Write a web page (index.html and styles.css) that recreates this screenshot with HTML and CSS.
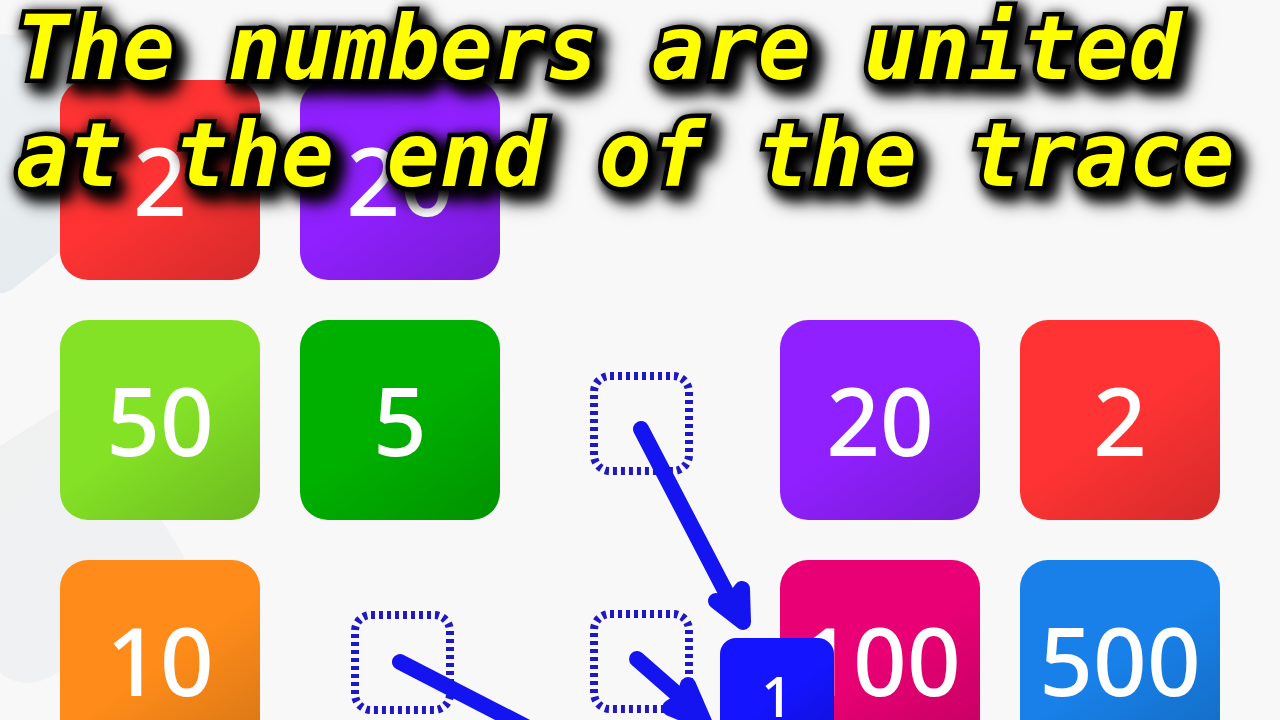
FILE: index.html
```
<!DOCTYPE html>
<html lang="en">
<head>
<meta charset="utf-8">
<meta name="viewport" content="width=device-width, initial-scale=1">
<title>Number tiles</title>
<link rel="stylesheet" href="styles.css">
</head>
<body>
<main class="stage">
  <svg class="layer" viewBox="0 0 1280 720" preserveAspectRatio="xMinYMin meet" aria-hidden="true">
    <defs>
      <linearGradient id="pale" x1="0" y1="0" x2="0" y2="1">
        <stop offset="0" stop-color="#eef1f3"/>
        <stop offset="1" stop-color="#e5ebee"/>
      </linearGradient>
      <linearGradient id="shade" x1="0" y1="0" x2="1" y2="1">
        <stop offset="0" stop-color="#f0f0f0"/>
        <stop offset="1" stop-color="#eff2f4"/>
      </linearGradient>
    </defs>
    <path d="M0 34L100 40V220L14 288Q6 294 0 293Z" fill="url(#pale)"/>
    <path d="M0 446L60 408L120 440L163 522L184 556L180 600L60 671Q30 692 4 676L0 672Z" fill="url(#shade)"/>
  </svg>

  <section class="board" aria-label="Board">
    <div class="tile red">2</div>
    <div class="tile violet">20</div>
    <div class="cell"></div>
    <div class="cell"></div>
    <div class="cell"></div>
    <div class="tile lime">50</div>
    <div class="tile green">5</div>
    <div class="cell"></div>
    <div class="tile violet">20</div>
    <div class="tile red">2</div>
    <div class="tile orange">10</div>
    <div class="cell"></div>
    <div class="cell"></div>
    <div class="tile pink">100</div>
    <div class="tile blue">500</div>
  </section>

  <svg class="layer" viewBox="0 0 1280 720" preserveAspectRatio="xMinYMin meet" aria-hidden="true">
    <g class="slot">
      <rect x="594" y="376" width="95" height="95" rx="16"/>
      <rect x="594" y="614" width="95" height="95" rx="16"/>
      <rect x="355" y="615" width="95" height="95" rx="16"/>
    </g>
    <g class="arrow">
      <path d="M641 429L730 600"/>
      <path class="head" d="M716 601L731 604L742 589L743 622Z"/>
      <path d="M637 659L686 702"/>
      <path class="head" d="M688 685L684 699L670 708L704 722Z"/>
      <path d="M400 662L600 765"/>
    </g>
  </svg>

  <div class="tile moving">1</div>

  <h1 class="caption">
    <span class="line">The numbers are united</span>
    <span class="line">at the end of the trace</span>
  </h1>
</main>
</body>
</html>
```
FILE: styles.css
```
* {
  box-sizing: border-box;
}

body {
  margin: 0;
  background: #f8f8f8;
}

.stage {
  position: relative;
  height: 100vh;
  overflow: hidden;
}

.layer {
  position: absolute;
  top: 0;
  left: 0;
  width: 100%;
  pointer-events: none;
}

.board {
  position: relative;
  display: grid;
  grid-template-columns: repeat(5, 1fr);
  gap: 40px;
  padding: 80px 60px;
}

.tile,
.cell {
  aspect-ratio: 1;
}

.tile {
  display: flex;
  align-items: center;
  justify-content: center;
  border-radius: 28px;
  color: #fff;
  font: 500 94px/1 "Noto Sans", "Open Sans", sans-serif;
}

.red { background: linear-gradient(145deg, #ff3333 50%, #d42a2a); }
.violet { background: linear-gradient(145deg, #9020ff 50%, #761ad2); }
.lime { background: linear-gradient(145deg, #84e226 50%, #6cba1f); }
.green { background: linear-gradient(145deg, #00b000 50%, #009200); }
.orange { background: linear-gradient(145deg, #ff8c1a 50%, #d47415); }
.pink { background: linear-gradient(145deg, #e80074 50%, #c00060); }
.blue { background: linear-gradient(145deg, #1880e8 50%, #146ac0); }

.slot {
  fill: none;
  stroke: #2018c0;
  stroke-width: 8;
  stroke-dasharray: 4 4;
}

.arrow {
  fill: none;
  stroke: #1414f0;
  stroke-width: 16;
  stroke-linecap: round;
  stroke-linejoin: round;
}

.head {
  fill: #1414f0;
}

.moving {
  position: absolute;
  top: 638px;
  left: 720px;
  width: 114px;
  border-radius: 16px;
  background: linear-gradient(145deg, #1414ff 50%, #1010d4);
  font-size: 56px;
}

.caption {
  position: absolute;
  top: -5px;
  left: 16px;
  margin: 0;
  color: #ff0;
  font: italic 700 88px/107px "DejaVu Sans Mono", monospace;
  white-space: nowrap;
  paint-order: stroke fill;
  -webkit-text-stroke: 9px #000;
  filter: drop-shadow(6px 7px 7px #000) drop-shadow(3px 3px 7px #000);
}

.line {
  display: block;
}
```
